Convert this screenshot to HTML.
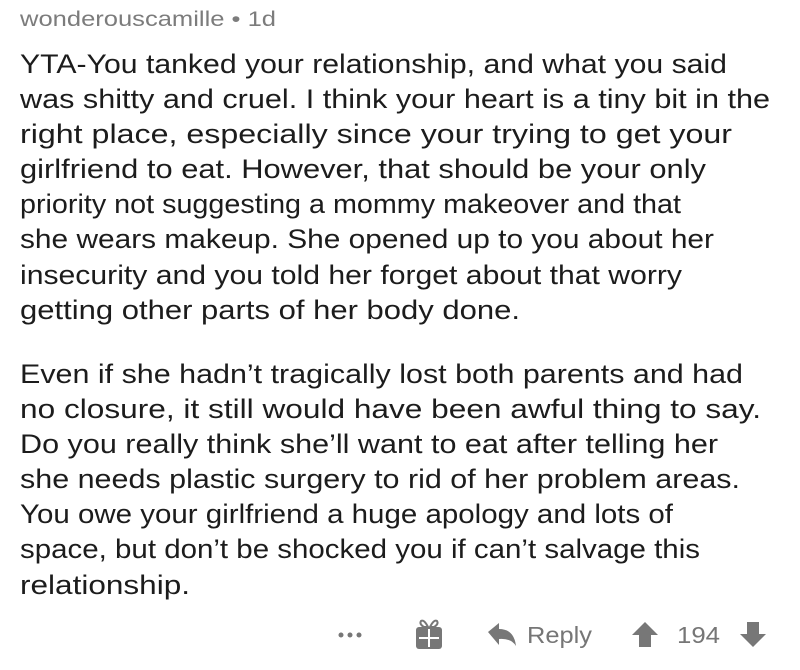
<!DOCTYPE html>
<html><head><meta charset="utf-8"><style>
html,body{margin:0;padding:0;background:#fff;width:800px;height:670px;overflow:hidden}
svg{display:block}
.t{font-family:"Liberation Sans",sans-serif;font-size:26.5px;fill:#1c1c1c}
.h{font-family:"Liberation Sans",sans-serif;font-size:21px;fill:#7c7c7c}
.f{font-family:"Liberation Sans",sans-serif;font-size:23px;fill:#767676}
</style></head><body>
<svg width="800" height="670" viewBox="0 0 800 670">
<text class="h" x="20" y="26" textLength="256" lengthAdjust="spacingAndGlyphs">wonderouscamille • 1d</text>
<g class="t">
<text x="20" y="73" textLength="707" lengthAdjust="spacingAndGlyphs">YTA-You tanked your relationship, and what you said</text>
<text x="20" y="108" textLength="750" lengthAdjust="spacingAndGlyphs">was shitty and cruel. I think your heart is a tiny bit in the</text>
<text x="20" y="143" textLength="712" lengthAdjust="spacingAndGlyphs">right place, especially since your trying to get your</text>
<text x="20" y="178" textLength="686" lengthAdjust="spacingAndGlyphs">girlfriend to eat. However, that should be your only</text>
<text x="20" y="213" textLength="661" lengthAdjust="spacingAndGlyphs">priority not suggesting a mommy makeover and that</text>
<text x="20" y="248" textLength="694" lengthAdjust="spacingAndGlyphs">she wears makeup. She opened up to you about her</text>
<text x="20" y="284" textLength="662" lengthAdjust="spacingAndGlyphs">insecurity and you told her forget about that worry</text>
<text x="20" y="319" textLength="500" lengthAdjust="spacingAndGlyphs">getting other parts of her body done.</text>
<text x="20" y="383" textLength="723" lengthAdjust="spacingAndGlyphs">Even if she hadn’t tragically lost both parents and had</text>
<text x="20" y="418" textLength="741" lengthAdjust="spacingAndGlyphs">no closure, it still would have been awful thing to say.</text>
<text x="20" y="453" textLength="698" lengthAdjust="spacingAndGlyphs">Do you really think she’ll want to eat after telling her</text>
<text x="20" y="488" textLength="720" lengthAdjust="spacingAndGlyphs">she needs plastic surgery to rid of her problem areas.</text>
<text x="20" y="523" textLength="653" lengthAdjust="spacingAndGlyphs">You owe your girlfriend a huge apology and lots of</text>
<text x="20" y="558" textLength="680" lengthAdjust="spacingAndGlyphs">space, but don’t be shocked you if can’t salvage this</text>
<text x="20" y="594" textLength="170" lengthAdjust="spacingAndGlyphs">relationship.</text>
</g>
<g fill="#777">
<circle cx="341" cy="635" r="2.5"/><circle cx="350" cy="635" r="2.5"/><circle cx="359" cy="635" r="2.5"/>
<rect x="416" y="627" width="26" height="22" rx="3"/>
<path d="M428 627 q-4 -8 -7 -6 q-2 3 3 6z M430 627 q4 -8 7 -6 q2 3 -3 6z" fill="none" stroke="#777" stroke-width="2"/>
<rect x="428" y="629" width="2" height="18" fill="#fff"/>
<rect x="419" y="637" width="20" height="2" fill="#fff"/>
<path d="M488 632 l11 -9 v6 q15 0 17 17 q-5 -8 -17 -7 v6z"/>
<path d="M645 622 l-13 13 h7 v12 h12 v-12 h7z"/>
<path d="M753 647 l-13 -13 h7 v-12 h12 v12 h7z"/>
</g>
<text class="f" x="527" y="643" textLength="65" lengthAdjust="spacingAndGlyphs">Reply</text>
<text class="f" x="677" y="643" textLength="43" lengthAdjust="spacingAndGlyphs">194</text>
</svg>
</body></html>
